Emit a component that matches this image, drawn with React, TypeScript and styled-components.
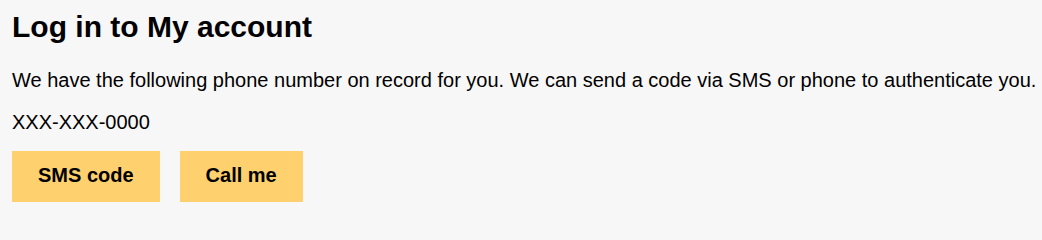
import React from "react"
import styled, { createGlobalStyle } from "styled-components"

const GlobalStyle = createGlobalStyle`
    html, body {
        margin: 0;
        padding: 0;
        background: #f7f7f7;
    }
    body {
        font-family: "Liberation Sans", Arial, sans-serif;
        color: #000;
    }
`

const Page = styled.main`
    display: flex;
    flex-direction: column;
    align-items: flex-start;
    padding: 10px 0 9px 12px;
`

const Title = styled.h1`
    margin: 0 0 25px;
    font-size: 30px;
    font-weight: 700;
    line-height: 34px;
`

const Text = styled.p<{ $gap: number }>`
    margin: 0 0 ${(p) => p.$gap}px;
    font-size: 20px;
    line-height: 23px;
    white-space: nowrap;
`

const Actions = styled.div`
    display: flex;
    gap: 20px;
`

const Button = styled.button`
    border: 0;
    border-radius: 0;
    background: #fed06e;
    padding: 13px 26px 15px;
    font-family: inherit;
    font-size: 20px;
    font-weight: 700;
    line-height: 23px;
    color: #000;
    cursor: pointer;

    :hover {
        background: #f5c65e;
    }
`

function App() {
    return (
        <>
            <GlobalStyle />
            <Page>
                <Title>Log in to My account</Title>
                <Text $gap={19}>
                    We have the following phone number on record for you. We can send a code via SMS or phone to
                    authenticate you.
                </Text>
                <Text $gap={17}>XXX-XXX-0000</Text>
                <Actions>
                    <Button type="button">SMS code</Button>
                    <Button type="button">Call me</Button>
                </Actions>
            </Page>
        </>
    )
}

export default App
